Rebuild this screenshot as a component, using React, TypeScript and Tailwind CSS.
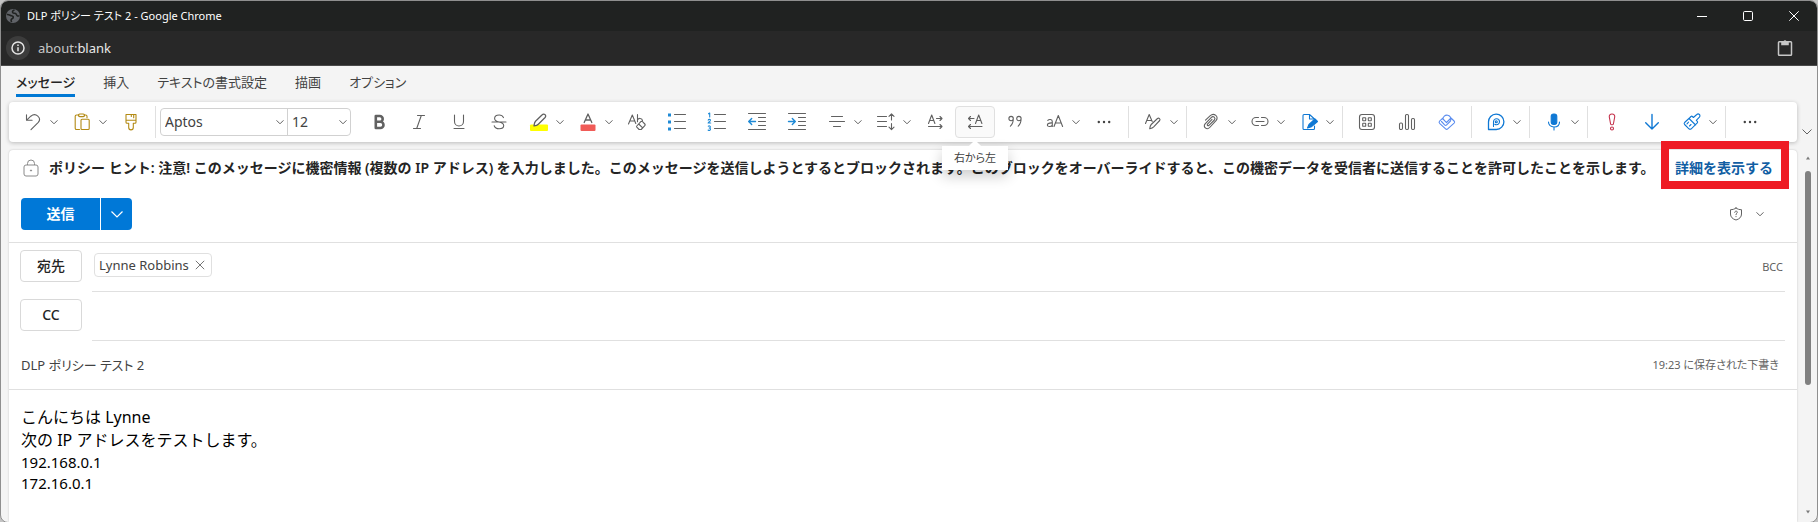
import type { ReactNode } from 'react';

const GRAY = '#616161';
const BLUE = '#0f78d4';

function Icon({ children, color = GRAY, label }: { children: ReactNode; color?: string; label?: string }) {
  return (
    <svg
      viewBox="0 0 20 20"
      className="size-5 shrink-0"
      fill="none"
      stroke={color}
      strokeWidth={1.1}
      strokeLinecap="round"
      strokeLinejoin="round"
      aria-hidden={label ? undefined : true}
    >
      {children}
    </svg>
  );
}

function Chevron({ className = 'text-[#616161]' }: { className?: string }) {
  return (
    <svg viewBox="0 0 10 10" className={`size-2.5 shrink-0 ${className}`} fill="none" stroke="currentColor" aria-hidden="true">
      <path d="M1.8 3.6 5 6.8l3.2-3.2" strokeLinecap="round" />
    </svg>
  );
}

function Tool({ label, children, active = false }: { label: string; children: ReactNode; active?: boolean }) {
  return (
    <button
      type="button"
      aria-label={label}
      className={
        active
          ? 'flex h-8 w-10 shrink-0 items-center justify-center rounded-sm border border-[#e0e0e0] bg-[#fafafa]'
          : 'flex h-8 w-10 shrink-0 items-center justify-center'
      }
    >
      {children}
    </button>
  );
}

function SplitTool({ label, children }: { label: string; children: ReactNode }) {
  return (
    <div className="flex h-8 shrink-0">
      <button type="button" aria-label={label} className="flex w-8 items-center justify-end pr-0.5">
        {children}
      </button>
      <button type="button" aria-label={`${label} のオプション`} className="flex w-[17px] items-center justify-center">
        <Chevron />
      </button>
    </div>
  );
}

function Divider() {
  return <div className="mx-1 h-8 w-px shrink-0 bg-[#e0e0e0]" />;
}

function Dots() {
  return (
    <Icon>
      <g fill="#424242" stroke="none">
        <circle cx="4.8" cy="10" r="1.2" />
        <circle cx="10" cy="10" r="1.2" />
        <circle cx="15.2" cy="10" r="1.2" />
      </g>
    </Icon>
  );
}

function TitleBar() {
  return (
    <header className="text-white">
      <div className="flex h-[30px] items-center bg-[#202221] pl-1">
        <svg viewBox="0 0 16 16" className="size-4" aria-hidden="true">
          <circle cx="8" cy="8" r="7" fill="#606368" />
          <path d="M2 6.500c2-.3 3.200 1 4.500 1.200 1.500.2 2.200 1.200 1.500 2.300-.5.900-1.700.6-1.900 1.800-.1.700.3 1.200.4 2.200M9.500 2c-1.500.5-2.500 1.500-1.800 2.600.6.900 1.900.4 2.800.8 1.300.6.8 2 2 2.500.8.300 1.300-.1 2-.1" fill="none" stroke="#202221" strokeWidth="1.600" />
        </svg>
        <h1 className="ml-1.5 text-[11px] leading-4 [font-feature-settings:'palt']">DLP ポリシー テスト 2 - Google Chrome</h1>
        <div className="ml-auto flex">
          <button type="button" aria-label="最小化" className="flex h-[30px] w-[46px] items-center justify-center">
            <svg viewBox="0 0 10 10" className="size-2.5" stroke="white" fill="none"><path d="M0 5.500h10" /></svg>
          </button>
          <button type="button" aria-label="最大化" className="flex h-[30px] w-[46px] items-center justify-center">
            <svg viewBox="0 0 10 10" className="size-2.5" stroke="white" fill="none"><rect x=".5" y=".5" width="9" height="9" rx="1.200" /></svg>
          </button>
          <button type="button" aria-label="閉じる" className="flex h-[30px] w-[46px] items-center justify-center">
            <svg viewBox="0 0 10 10" className="size-2.5" stroke="white" fill="none"><path d="m.3.3 9.400 9.400M9.700.3.3 9.700" /></svg>
          </button>
        </div>
      </div>
      <div className="flex h-[35px] items-center border-b border-[#4a4a4a] bg-[#282828] pl-[5px] pr-6">
        <button type="button" aria-label="サイト情報" className="flex size-6 items-center justify-center rounded-full bg-[#3c3c3c]">
          <svg viewBox="0 0 14 14" className="size-3.5" fill="none" stroke="#e3e3e3" strokeWidth="1.500" aria-hidden="true">
            <circle cx="7" cy="7" r="6" />
            <path d="M7 6.200v4M7 3.600v1.500" />
          </svg>
        </button>
        <p className="ml-2 text-[13px] leading-5 text-[#e8e8e8]">
          <span className="text-[#c7c7c7]">about:</span>blank
        </p>
        <button type="button" aria-label="クリップボード" className="ml-auto">
          <svg viewBox="0 0 16 18" className="h-[18px] w-4" fill="none" aria-hidden="true">
            <rect x="1.500" y="2.800" width="13" height="13.400" rx=".8" stroke="#c7c7c7" strokeWidth="1.500" />
            <path d="M4.200 2.500h2.200a1.700 1.700 0 0 1 3.200 0h2.200v3.700H4.200z" fill="#c7c7c7" />
          </svg>
        </button>
      </div>
    </header>
  );
}

function Tabs() {
  return (
    <nav className="flex h-9 items-start gap-7 pl-[15px] pt-1 text-[13px] leading-6 text-[#424242] [font-feature-settings:'palt']">
      <button type="button" className="border-b-[3px] border-[#0078d4] font-medium text-[#242424]">メッセージ</button>
      <button type="button">挿入</button>
      <button type="button">テキストの書式設定</button>
      <button type="button">描画</button>
      <button type="button">オプション</button>
    </nav>
  );
}

function FontPickers() {
  return (
    <div className="mr-2 flex h-7 shrink-0 rounded-sm border border-[#d1d1d1] text-[14px] leading-5 text-[#424242]">
      <label className="grid w-[127px] items-center border-r border-[#d1d1d1]">
        <select aria-label="フォント" className="col-start-1 row-start-1 w-full appearance-none pl-1 outline-none">
          <option>Aptos</option>
        </select>
        <span className="pointer-events-none col-start-1 row-start-1 justify-self-end pr-0.5"><Chevron /></span>
      </label>
      <label className="grid w-[62px] items-center">
        <select aria-label="フォント サイズ" className="col-start-1 row-start-1 w-full appearance-none pl-1 outline-none">
          <option>12</option>
        </select>
        <span className="pointer-events-none col-start-1 row-start-1 justify-self-end pr-0.5"><Chevron /></span>
      </label>
    </div>
  );
}

function Toolbar() {
  return (
    <div role="toolbar" aria-label="書式設定" className="relative z-10 flex h-10 min-w-0 grow items-center rounded-sm bg-white pl-1 shadow-[0_1px_4px_rgba(0,0,0,0.24)]">
      <SplitTool label="元に戻す">
        <Icon><path d="M3.500 2.700v5.600h5.600M3.700 8.100 7.800 4.200c5-4 11.200 1.600 7.500 6.100L8 17.600" /></Icon>
      </SplitTool>
      <SplitTool label="貼り付け">
        <Icon color="#b38a14">
          <path d="M7.500 17.500h-3a1.300 1.300 0 0 1-1.300-1.300V4.300A1.300 1.300 0 0 1 4.500 3H7M12 3h1.700A1.300 1.300 0 0 1 15 4.300v1.500" />
          <rect x="6.500" y="2" width="6" height="2.600" rx="1.200" />
          <rect x="9" y="7.200" width="8.200" height="10.300" rx="1" />
        </Icon>
      </SplitTool>
      <Tool label="書式のコピー">
        <Icon color="#b38a14">
          <path d="M5 2.500h10v7.800a1 1 0 0 1-1 1h-1.700v4.300a2.300 2.300 0 0 1-4.600 0v-4.300H6a1 1 0 0 1-1-1zM5 8.300h10M10.300 2.700v1.800M12.700 2.700v3" />
        </Icon>
      </Tool>
      <Divider />
      <FontPickers />
      <Tool label="太字">
        <Icon><path d="M6.800 4h4a2.900 2.900 0 0 1 0 5.800h-4zM6.800 9.800h4.600a3.100 3.100 0 0 1 0 6.200H6.800z" strokeWidth="2.600" /></Icon>
      </Tool>
      <Tool label="斜体">
        <Icon><path d="M8.500 3.500h7M4.500 16.500h7M12.300 3.500l-4.600 13" /></Icon>
      </Tool>
      <Tool label="下線">
        <Icon><path d="M5.500 3v6.500a4.500 4.500 0 0 0 9 0V3M5 16.500h10" /></Icon>
      </Tool>
      <Tool label="取り消し線">
        <Icon><path d="M14.500 5.600C13.800 4 12.200 3 10.200 3 7.600 3 5.600 4.400 5.600 6.500c0 2.200 2.300 3 4.400 3.500 2.500.6 4.700 1.400 4.700 3.500 0 2-2.200 3.300-4.600 3.300-2.300 0-4.200-1.100-4.900-3M3 10h14" /></Icon>
      </Tool>
      <SplitTool label="蛍光ペン">
        <Icon>
          <rect x="1" y="12.500" width="18" height="6.500" rx="1" fill="#ffff00" stroke="none" />
          <path d="m6.500 9.300 6.700-6.600a2 2 0 0 1 2.900 2.800L9.300 12.200c-.8.800-2.700 1.400-4.300 1.600.2-1.600.7-3.700 1.500-4.500z" fill="white" strokeWidth="1.300" />
        </Icon>
      </SplitTool>
      <SplitTool label="フォントの色">
        <Icon>
          <rect x="2.500" y="12.500" width="15" height="6.500" rx="1" fill="#f05b57" stroke="none" />
          <path d="M6.200 10.500 10 2l3.800 8.500M7.400 8h5.200" strokeWidth="1.300" />
        </Icon>
      </SplitTool>
      <Tool label="書式のクリア">
        <Icon>
          <path d="M1.500 12 5.300 3l3.500 8.500M2.800 9h4.800M10.500 2.500v7.300M10.500 8c1-2.200 4.600-2.200 5 .6" />
          <path d="m9.800 14 4-4.300a1.200 1.200 0 0 1 1.700 0l2.300 2.300a1.200 1.200 0 0 1 0 1.700l-3.600 3.800h-2.100l-2.300-2.300a.9.900 0 0 1 0-1.200zM11.700 12l4 3.900" />
        </Icon>
      </Tool>
      <Tool label="箇条書き">
        <Icon>
          <g fill="#1f8ad6" stroke="none"><rect x="1" y="1.500" width="3" height="3" /><rect x="1" y="8.500" width="3" height="3" /><rect x="1" y="15.500" width="3" height="3" /></g>
          <path d="M7.500 2.500h11M7.500 9.500h11M7.500 16.500h11" />
        </Icon>
      </Tool>
      <Tool label="段落番号">
        <Icon>
          <path d="m1.500 1.800 1.200-.8v4M1.200 8.200c.4-1.200 2.500-1 2.200.3-.2.900-1.400 1.300-2.300 2.500h2.600M1.300 14.200c1.200-.8 2.600.2 1.900 1.300-.3.500-1 .5-1 .5s1.300.1 1.300 1.200c0 1.300-1.600 1.500-2.400.8" stroke="#1f8ad6" />
          <path d="M7.500 2.500h11M7.500 9.500h11M7.500 16.500h11" />
        </Icon>
      </Tool>
      <Tool label="インデントを減らす">
        <Icon>
          <path d="M1.500 1.500h17M11.500 5.500h7M11.500 9.500h7M11.500 13.500h7M1.500 17.500h17" />
          <path d="M8.500 9.500H1.800m2.900-3-3 3 3 3" stroke="#1f8ad6" strokeWidth="1.400" />
        </Icon>
      </Tool>
      <Tool label="インデントを増やす">
        <Icon>
          <path d="M1.500 1.500h17M11.500 5.500h7M11.500 9.500h7M11.500 13.500h7M1.500 17.500h17" />
          <path d="M1.500 9.500h6.700m-2.900-3 3 3-3 3" stroke="#1f8ad6" strokeWidth="1.400" />
        </Icon>
      </Tool>
      <SplitTool label="配置">
        <Icon><path d="M4.500 4.500h11M2.500 9.500h15M6.500 14.500h7" /></Icon>
      </SplitTool>
      <SplitTool label="行間">
        <Icon><path d="M1.500 4.500h9M1.500 9.500h9M1.500 14.500h9M15.500 2v6M15.500 11.500v6M13 4.300 15.500 1.900 18 4.300M13 15.200l2.500 2.400 2.500-2.400" /></Icon>
      </SplitTool>
      <Tool label="左から右">
        <Icon><path d="m3.500 11.500 3.200-8.500 3.200 8.500M4.700 8.500h4M11.500 6.500H17m-2-2 2 2-2 2M3.500 14.500H17m-2-2 2 2-2 2" /></Icon>
      </Tool>
      <div className="relative shrink-0">
        <Tool label="右から左" active>
          <Icon><path d="m10.500 11.500 3.200-8.500 3.200 8.500M11.700 8.500h4M9 6.500H3.500m2-2-2 2 2 2M17 14.500H3.500m2-2-2 2 2 2" /></Icon>
        </Tool>
        <div role="tooltip" className="absolute left-1/2 top-10 w-[66px] -translate-x-1/2 bg-white py-1 text-center text-[11px] leading-4 text-[#424242] shadow-[0_6px_14px_rgba(0,0,0,0.2)] [font-feature-settings:'palt']">
          <span className="absolute -top-1 left-7 size-2.5 rotate-45 bg-white" />
          <span className="relative">右から左</span>
        </div>
      </div>
      <Tool label="引用">
        <Icon><path d="M8.300 6.600a2.200 2.200 0 1 1-4.400 0 2.200 2.200 0 0 1 4.400 0c0 3.500-.8 5.700-2.900 7.600M16.100 6.600a2.200 2.200 0 1 1-4.400 0 2.200 2.200 0 0 1 4.400 0c0 3.500-.8 5.700-2.900 7.600" /></Icon>
      </Tool>
      <SplitTool label="大文字と小文字の変更">
        <Icon><path d="M2.800 8.300c1.300-1.200 4.500-1.200 4.500 1.400v4.800M7.300 10.800c-2 .1-4.900-.1-4.900 2.100 0 2.300 4 2 4.900 0M9 14.500l4.300-11 4.300 11M10.500 11h5.600" /></Icon>
      </SplitTool>
      <Tool label="その他の書式"><Dots /></Tool>
      <Divider />
      <SplitTool label="スタイル">
        <Icon>
          <path d="m2.500 11.500 3.700-9 3 7M3.800 8.500h4.600" />
          <path d="m8.200 12.500 6.300-6a1.500 1.500 0 0 1 2.200 2l-6 6.400c-.8.800-2.500 1.500-4 1.900.2-1.600.7-3.500 1.500-4.300z" />
        </Icon>
      </SplitTool>
      <Divider />
      <SplitTool label="ファイルの添付">
        <Icon><path d="m4.500 8.200 4.800-4.500c3.500-3.300 9.200.8 5.700 5L8.700 15.500c-2.900 3-7.200-.7-4.600-3.700l6.300-6.500c1.900-1.800 4.700.6 3 2.700L8 13.300c-1 .9-2.300-.1-1.500-1.200l4.500-4.700" /></Icon>
      </SplitTool>
      <SplitTool label="リンク">
        <Icon><path d="M8.500 5.500H6a4 4 0 0 0 0 8h2.500M11.500 5.500H14a4 4 0 0 1 0 8h-2.500M6 9.500h8" /></Icon>
      </SplitTool>
      <SplitTool label="署名">
        <Icon color="#0f78d4">
          <path d="M15.500 14v2.500a1 1 0 0 1-1 1h-9.500a1 1 0 0 1-1-1v-13a1 1 0 0 1 1-1h5.500l5 4.500v1M10.500 2.500v4.500h4" />
          <path d="m8.500 16 1.500-3.500 6-5.500 2.500 2.500-6 5.200z" fill="#0f78d4" />
        </Icon>
      </SplitTool>
      <Divider />
      <Tool label="アプリ">
        <Icon>
          <rect x="2.500" y="2.500" width="15" height="15" rx="2.500" />
          <rect x="5.700" y="5.700" width="3" height="3" rx=".4" /><rect x="11.300" y="5.700" width="3" height="3" rx=".4" /><rect x="5.700" y="11.300" width="3" height="3" rx=".4" /><rect x="11.300" y="11.300" width="3" height="3" rx=".4" />
        </Icon>
      </Tool>
      <Tool label="投票">
        <Icon><rect x="2.500" y="11" width="3" height="6.500" rx="1.200" /><rect x="8.500" y="2.500" width="3" height="15" rx="1.200" /><rect x="14.500" y="6.500" width="3" height="11" rx="1.200" /></Icon>
      </Tool>
      <Tool label="Viva">
        <Icon color="#5b8def">
          <path d="M6 7.500a4 4 0 1 1 7.500 1.500l-3.800 3.800a1.500 1.500 0 0 1-2.100 0L4.500 9.500M6 5.800l-3.400 3.400a1.500 1.500 0 0 0 0 2.100l6 5.600a1.500 1.500 0 0 0 2.100 0l6.400-5.800a1.500 1.500 0 0 0 0-2.100L14 6M6 7l3.500 3.600M9.500 10.500l4-4" />
        </Icon>
      </Tool>
      <Divider />
      <SplitTool label="ループ コンポーネント">
        <Icon color={BLUE}>
          <path d="M2.500 17.500V10A7.700 7.700 0 1 1 10.300 17.500z" strokeWidth="1.300" />
          <path d="M7.500 14.500V9.800a3 3 0 1 1 3 3c-1 0-1.700-.5-1.700-.5" />
          <circle cx="10.300" cy="9.800" r="1" />
        </Icon>
      </SplitTool>
      <Divider />
      <SplitTool label="ディクテーション">
        <Icon color={BLUE}>
          <rect x="7.200" y="2" width="5.600" height="10.500" rx="2.500" fill={BLUE} />
          <path d="M4.500 10c0 3.200 2.300 5 5.500 5s5.500-1.800 5.500-5M10 15v3" />
        </Icon>
      </SplitTool>
      <Divider />
      <Tool label="重要度 - 高">
        <Icon color="#c4314b"><path d="M10 2c-1.900 0-3 1.200-2.700 3l1.300 7c.2 1 2.600 1 2.800 0l1.300-7c.3-1.800-.8-3-2.700-3z" /><circle cx="10" cy="16.500" r="1.500" /></Icon>
      </Tool>
      <Tool label="重要度 - 低">
        <Icon color={BLUE}><path d="M10 2.500v14.500M3.700 10.800l6.300 6.300 6.300-6.300" strokeWidth="1.400" /></Icon>
      </Tool>
      <SplitTool label="エディター">
        <Icon color={BLUE}><path d="m8 5.500 1-1a1 1 0 0 1 1.400 0l1 1 3.400-3a1.800 1.800 0 0 1 2.600 2.600l-3.100 3.300 1 1a1 1 0 0 1 0 1.400l-5.800 5.800a2 2 0 0 1-2.800 0L2.600 12.500a1.500 1.500 0 0 1 0-2zM7 6.500l6.600 6.500M5 11.800l1.500-1.600M7.500 14l1.500-1.500" /></Icon>
      </SplitTool>
      <Divider />
      <Tool label="その他"><Dots /></Tool>
    </div>
  );
}

function PolicyTip() {
  return (
    <div className="flex h-9 items-center whitespace-nowrap pl-[14px] pr-6 text-[14px] font-semibold leading-5 text-[#242424]">
      <svg viewBox="0 0 16 18" className="h-[18px] w-4 shrink-0" fill="none" stroke="#8a8a8a" aria-hidden="true">
        <rect x="1" y="6" width="14" height="11" rx="2" />
        <path d="M4.500 6V4.500a3.500 3.500 0 0 1 7 0V6" />
        <circle cx="8" cy="11.500" r=".6" fill="#616161" />
      </svg>
      <p className="ml-2.5">
        ポリシー ヒント: 注意! このメッセージに機密情報 (複数の IP アドレス) を入力しました。このメッセージを送信しようとするとブロックされます。このブロックをオーバーライドすると、この機密データを受信者に送信することを許可したことを示します。
      </p>
      <div className="relative ml-auto">
        <a href="#details" className="text-[#115ea3]">詳細を表示する</a>
        <span className="pointer-events-none absolute -bottom-[11px] -left-[14px] -right-4 -top-[17px] z-20 border-8 border-[#ee1c25]" />
      </div>
    </div>
  );
}

function SendRow() {
  return (
    <div className="flex h-[57px] items-start border-b border-[#e0e0e0] pl-3 pr-8 pt-3">
      <button type="button" className="h-8 w-[79px] rounded-l-sm bg-[#0078d7] text-[14px] font-bold leading-5 text-white">送信</button>
      <button type="button" aria-label="送信オプション" className="ml-px flex h-8 w-[31px] items-center justify-center rounded-r-sm bg-[#0078d7]">
        <svg viewBox="0 0 14 14" className="size-3.5" fill="none" stroke="white" strokeWidth="1.200"><path d="m1.500 4.500 5.500 5.500 5.500-5.500" /></svg>
      </button>
      <button type="button" aria-label="秘密度" className="ml-auto flex h-8 items-center gap-3">
        <svg viewBox="0 0 14 14" className="size-3.5" fill="none" stroke="#616161" strokeLinecap="round">
          <path d="M7 1C5.600 2.200 3.500 2.700 1.500 2.700V7c0 3 2 5 5.500 6 3.500-1 5.500-3 5.500-6V2.700C10.500 2.700 8.400 2.200 7 1z" />
          <path d="M5.700 5.300c.1-1.700 2.700-1.600 2.600 0C8.200 6.300 7 6.300 7 7.700M7 9.500v.2" />
        </svg>
        <Chevron />
      </button>
    </div>
  );
}

const fieldButton = 'h-8 w-[62px] shrink-0 rounded-sm border border-[#d9d9d9] text-[14px] font-medium leading-5 text-[#242424]';

function Recipients() {
  return (
    <div className="pl-[11px] pr-3">
      <div className="flex h-[49px] items-stretch gap-2.5">
        <button type="button" className={`mt-[7px] ${fieldButton}`}>宛先</button>
        <div className="flex grow items-start border-b border-[#e0e0e0] pl-0.5 pt-2.5">
          <div className="flex h-6 items-center gap-1.5 rounded-sm border border-[#e0e0e0] px-1 pr-1.5 text-[13px] leading-5 text-[#424242]">
            Lynne Robbins
            <button type="button" aria-label="Lynne Robbins を削除">
              <svg viewBox="0 0 10 10" className="size-2.5" fill="none" stroke="#757575"><path d="m.8.8 8.400 8.400M9.200.8.8 9.200" /></svg>
            </button>
          </div>
          <input aria-label="宛先" className="h-6 min-w-0 grow outline-none" />
          <button type="button" className="mr-0.5 mt-1 text-[11px] leading-5 text-[#616161]">BCC</button>
        </div>
      </div>
      <div className="flex h-[49px] items-stretch gap-2.5">
        <button type="button" className={`mt-[7px] ${fieldButton}`}>CC</button>
        <input aria-label="CC" className="min-w-0 grow border-b border-[#e0e0e0] px-1 outline-none" />
      </div>
    </div>
  );
}

function Subject() {
  return (
    <div className="flex h-[49px] items-center border-b border-[#e0e0e0] pl-3 pr-[18px]">
      <input
        aria-label="件名"
        defaultValue="DLP ポリシー テスト 2"
        className="min-w-0 grow text-[13px] leading-5 text-[#424242] outline-none [font-feature-settings:'palt']"
      />
      <p className="text-[11px] leading-5 text-[#616161] [font-feature-settings:'palt']">19:23 に保存された下書き</p>
    </div>
  );
}

function Body() {
  return (
    <div className="px-3 pb-7 pt-4 text-black">
      <div className="text-[16px] leading-[23px]">
        <p>こんにちは Lynne</p>
        <p>次の IP アドレスをテストします。</p>
      </div>
      <div className="text-[15px] leading-[21px]">
        <p>192.168.0.1</p>
        <p>172.16.0.1</p>
      </div>
    </div>
  );
}

export default function App() {
  return (
    <div className="flex min-h-screen flex-col bg-[#c4c4c4] pb-px font-['Noto_Sans','Noto_Sans_CJK_JP',sans-serif]">
      <div className="flex grow flex-col overflow-hidden rounded-lg border border-[#8f8f8f] bg-[#f4f4f4]">
        <TitleBar />
        <Tabs />
        <div className="flex items-end pl-2">
          <Toolbar />
          <button type="button" aria-label="リボンを折りたたむ" className="flex w-5 shrink-0 items-center justify-center pb-1">
            <svg viewBox="0 0 12 12" className="size-3" fill="none" stroke="#616161"><path d="m1.500 3.500 4.500 4.500 4.500-4.500" /></svg>
          </button>
        </div>
        <div className="flex grow pl-2 pt-2">
          <main className="min-w-0 grow rounded-t-sm bg-white shadow-[0_0_2px_rgba(0,0,0,0.22)]">
            <PolicyTip />
            <SendRow />
            <Recipients />
            <Subject />
            <Body />
          </main>
          <div aria-hidden="true" className="flex w-5 shrink-0 flex-col items-center pb-2 pl-0.5 pt-1.5">
            <svg viewBox="0 0 4 4" className="size-1" fill="#7a7a7a"><path d="M0 3.500 2 .5l2 3z" /></svg>
            <div className="mt-[11px] h-[214px] w-1.5 rounded-full bg-[#808080]" />
            <svg viewBox="0 0 4 4" className="mt-auto size-1" fill="#7a7a7a"><path d="M0 .5h4l-2 3z" /></svg>
          </div>
        </div>
      </div>
    </div>
  );
}
